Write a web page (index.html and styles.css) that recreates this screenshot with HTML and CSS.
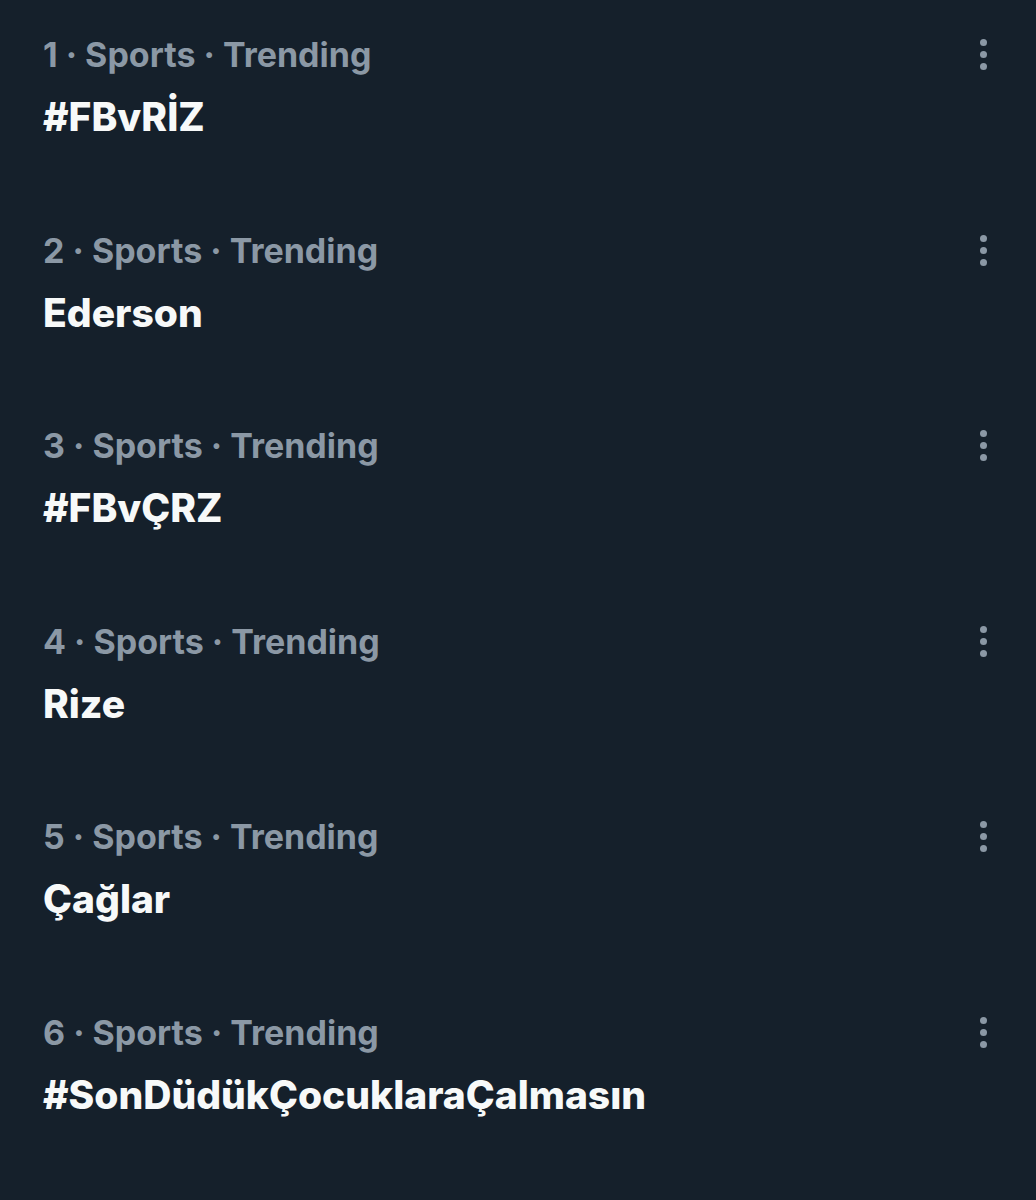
FILE: index.html
```html
<!DOCTYPE html>
<html lang="tr">
<head>
<meta charset="utf-8">
<link rel="stylesheet" href="styles.css">
</head>
<body>
<main class="list">
  <div class="trend">
    <div class="info">
      <div class="meta">1 · Sports · Trending</div>
      <div class="title">#FBvRİZ</div>
    </div>
    <div class="more"><span class="dot"></span><span class="dot"></span><span class="dot"></span></div>
  </div>
  <div class="trend">
    <div class="info">
      <div class="meta">2 · Sports · Trending</div>
      <div class="title">Ederson</div>
    </div>
    <div class="more"><span class="dot"></span><span class="dot"></span><span class="dot"></span></div>
  </div>
  <div class="trend">
    <div class="info">
      <div class="meta">3 · Sports · Trending</div>
      <div class="title">#FBvÇRZ</div>
    </div>
    <div class="more"><span class="dot"></span><span class="dot"></span><span class="dot"></span></div>
  </div>
  <div class="trend">
    <div class="info">
      <div class="meta">4 · Sports · Trending</div>
      <div class="title">Rize</div>
    </div>
    <div class="more"><span class="dot"></span><span class="dot"></span><span class="dot"></span></div>
  </div>
  <div class="trend">
    <div class="info">
      <div class="meta">5 · Sports · Trending</div>
      <div class="title">Çağlar</div>
    </div>
    <div class="more"><span class="dot"></span><span class="dot"></span><span class="dot"></span></div>
  </div>
  <div class="trend">
    <div class="info">
      <div class="meta">6 · Sports · Trending</div>
      <div class="title">#SonDüdükÇocuklaraÇalmasın</div>
    </div>
    <div class="more"><span class="dot"></span><span class="dot"></span><span class="dot"></span></div>
  </div>
</main>
</body>
</html>
```
FILE: styles.css
```css
html, body {
  margin: 0;
  padding: 0;
  background: #15202b;
}
body {
  font-family: Inter, "Liberation Sans", Arial, sans-serif;
  width: 1036px;
  height: 1200px;
  overflow: hidden;
}
.list {
  display: flex;
  flex-direction: column;
}
.trend {
  display: flex;
  justify-content: space-between;
  align-items: flex-start;
  height: 195.5px;
  box-sizing: border-box;
  padding: 32px 40px 0 43px;
}
.meta {
  color: #8b98a5;
  font-size: 34px;
  font-weight: 700;
  line-height: 46px;
}
.title {
  color: #f7f9f9;
  font-size: 39px;
  font-weight: 800;
  line-height: 46px;
  margin-top: 16px;
}
.more {
  display: flex;
  flex-direction: column;
  align-items: center;
  gap: 5px;
  width: 26px;
  padding-top: 7px;
}
.dot {
  width: 7px;
  height: 7px;
  border-radius: 50%;
  background: #8b98a5;
}
```
